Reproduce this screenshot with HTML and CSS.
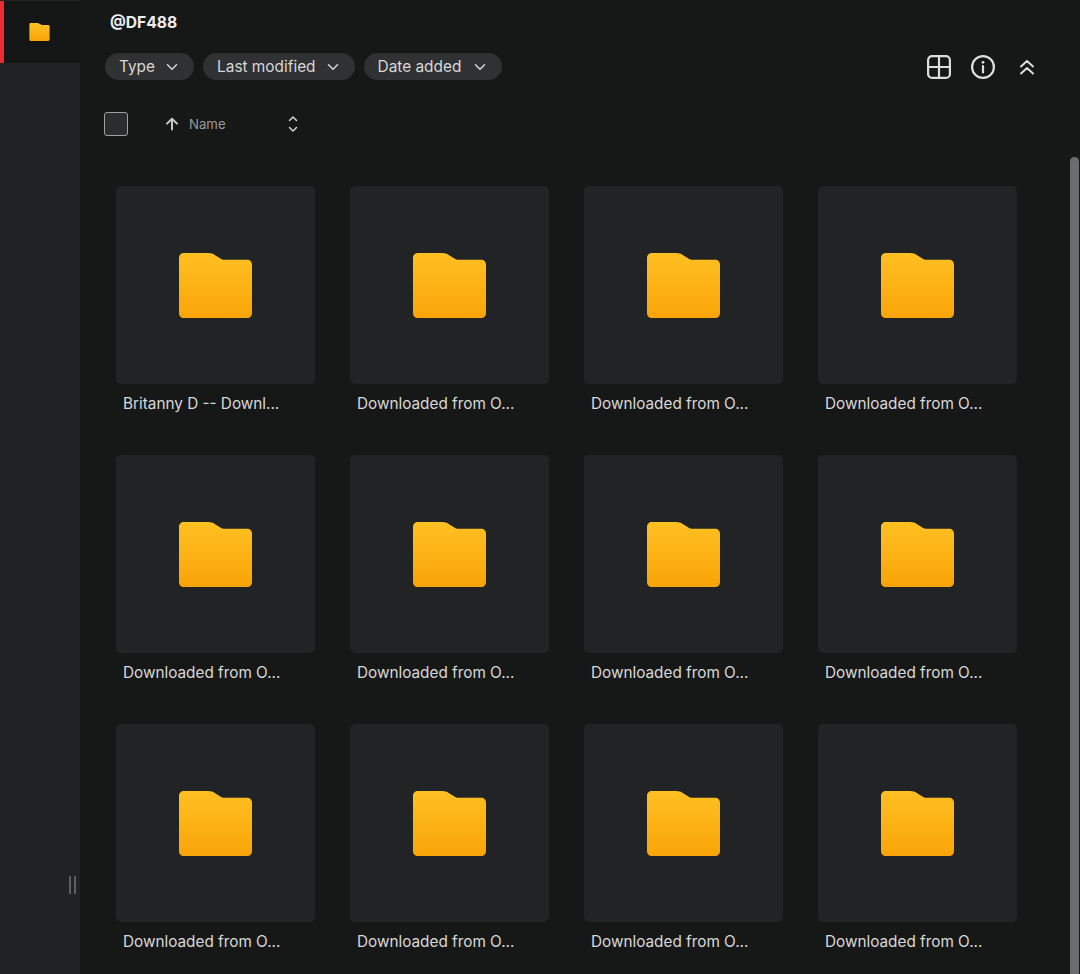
FILE: index.html
```html
<!DOCTYPE html>
<html lang="en">

<head>
    <meta charset="UTF-8">
    <meta name="viewport" content="width=device-width, initial-scale=1.0">
    <title>@DF488</title>
    <link rel="stylesheet" href="styles.css">
</head>

<body>
    <svg class="defs" width="0" height="0">
        <defs>
            <linearGradient id="folderFill" x1="0" y1="0" x2="0" y2="1">
                <stop offset="0" stop-color="#ffc022" />
                <stop offset="1" stop-color="#f9a408" />
            </linearGradient>
            <symbol id="folder" viewBox="0 0 73 65">
                <path fill="url(#folderFill)" d="M5 0H29C32 0 34 .7 36.5 2.4L41 5.2C42.5 6.2 44 6.8 46 6.8H68C71 6.8 73 8.8 73 11.8V60C73 63 71 65 68 65H5C2 65 0 63 0 60V5C0 2 2 0 5 0Z" />
            </symbol>
            <symbol id="chevron" viewBox="0 0 12 8">
                <path d="M1.5 1.8 6 6.2l4.5-4.4" fill="none" stroke="currentColor" stroke-width="1.5" stroke-linecap="round" stroke-linejoin="round" />
            </symbol>
        </defs>
    </svg>

    <aside class="sidebar">
        <div class="side-item">
            <svg class="side-folder"><use href="#folder" /></svg>
        </div>
        <div class="resize-handle"></div>
    </aside>

    <main class="content">
        <h1 class="title">@DF488</h1>

        <div class="toolbar">
            <button class="pill">Type <svg class="chev"><use href="#chevron" /></svg></button>
            <button class="pill">Last modified <svg class="chev"><use href="#chevron" /></svg></button>
            <button class="pill pill-date">Date added <svg class="chev"><use href="#chevron" /></svg></button>
            <div class="tools">
                <svg class="tool" viewBox="0 0 24 24" fill="none" stroke="currentColor" stroke-width="2.2">
                    <rect x="1.1" y="1.1" width="21.8" height="21.8" rx="4" />
                    <path d="M12 1V23M1 12H23" />
                </svg>
                <svg class="tool" viewBox="0 0 24 24" fill="none" stroke="currentColor" stroke-width="2.2">
                    <circle cx="12" cy="12" r="10.9" />
                    <path d="M12 11V17.5" stroke-linecap="round" />
                    <circle cx="12" cy="7.3" r="1.4" fill="currentColor" stroke="none" />
                </svg>
                <svg class="tool tool-small" viewBox="0 0 16 16" fill="none" stroke="currentColor" stroke-width="1.9" stroke-linecap="round" stroke-linejoin="round">
                    <path d="M2 7.5 8 2l6 5.5M2 14.5 8 9l6 5.5" />
                </svg>
            </div>
        </div>

        <div class="sort-row">
            <span class="checkbox"></span>
            <svg class="arrow-up" viewBox="0 0 14 14" fill="none" stroke="currentColor" stroke-width="2" stroke-linecap="round" stroke-linejoin="round">
                <path d="M7 12.5V1.8M2 6.6 7 1.8l5 4.8" />
            </svg>
            <span class="sort-name">Name</span>
            <svg class="updown" viewBox="0 0 10 18" fill="none" stroke="currentColor" stroke-width="1.5" stroke-linecap="round" stroke-linejoin="round">
                <path d="M1.5 5.5 5 2l3.5 3.5M1.5 12.5 5 16l3.5-3.5" />
            </svg>
        </div>

        <div class="grid">
            <div class="card">
                <div class="thumb"><svg class="folder"><use href="#folder" /></svg></div>
                <p class="name">Britanny D -- Downl...</p>
            </div>
            <div class="card">
                <div class="thumb"><svg class="folder"><use href="#folder" /></svg></div>
                <p class="name">Downloaded from O...</p>
            </div>
            <div class="card">
                <div class="thumb"><svg class="folder"><use href="#folder" /></svg></div>
                <p class="name">Downloaded from O...</p>
            </div>
            <div class="card">
                <div class="thumb"><svg class="folder"><use href="#folder" /></svg></div>
                <p class="name">Downloaded from O...</p>
            </div>
            <div class="card">
                <div class="thumb"><svg class="folder"><use href="#folder" /></svg></div>
                <p class="name">Downloaded from O...</p>
            </div>
            <div class="card">
                <div class="thumb"><svg class="folder"><use href="#folder" /></svg></div>
                <p class="name">Downloaded from O...</p>
            </div>
            <div class="card">
                <div class="thumb"><svg class="folder"><use href="#folder" /></svg></div>
                <p class="name">Downloaded from O...</p>
            </div>
            <div class="card">
                <div class="thumb"><svg class="folder"><use href="#folder" /></svg></div>
                <p class="name">Downloaded from O...</p>
            </div>
            <div class="card">
                <div class="thumb"><svg class="folder"><use href="#folder" /></svg></div>
                <p class="name">Downloaded from O...</p>
            </div>
            <div class="card">
                <div class="thumb"><svg class="folder"><use href="#folder" /></svg></div>
                <p class="name">Downloaded from O...</p>
            </div>
            <div class="card">
                <div class="thumb"><svg class="folder"><use href="#folder" /></svg></div>
                <p class="name">Downloaded from O...</p>
            </div>
            <div class="card">
                <div class="thumb"><svg class="folder"><use href="#folder" /></svg></div>
                <p class="name">Downloaded from O...</p>
            </div>
        </div>

        <div class="scrollbar"></div>
    </main>
</body>

</html>
```

FILE: styles.css
```css
html,
body {
    height: 100%;
}

body {
    margin: 0;
    display: flex;
    overflow: hidden;
    background-color: #161717;
    color: #e4e4e4;
    font-family: Inter, "Liberation Sans", sans-serif;
}

.defs {
    position: absolute;
}

.sidebar {
    position: relative;
    width: 80px;
    flex-shrink: 0;
    background-color: #202224;
}

.side-item {
    height: 62px;
    margin-top: 1px;
    border-left: 4px solid #ee2b33;
    background-color: #141515;
    display: flex;
    align-items: center;
    padding-left: 25px;
}

.side-folder {
    width: 21px;
    height: 18px;
}

.resize-handle {
    position: absolute;
    left: 69px;
    top: 876px;
    width: 3px;
    height: 18px;
    border-left: 2px solid #5c5e60;
    border-right: 2px solid #5c5e60;
}

.content {
    position: relative;
    flex: 1;
    padding-left: 25px;
}

.title {
    margin: 0;
    padding: 13px 0 0 5px;
    height: 40px;
    box-sizing: border-box;
    font-size: 15.6px;
    line-height: 19px;
    font-weight: 700;
    color: #eeeeee;
}

.toolbar {
    display: flex;
    align-items: center;
    gap: 9px;
    height: 27px;
    margin-top: 13px;
}

.pill {
    display: flex;
    align-items: center;
    gap: 11px;
    height: 27px;
    padding: 0 16px 0 14px;
    border: none;
    border-radius: 14px;
    background-color: #2f3132;
    color: #d8d8d8;
    font-family: inherit;
    font-size: 15.4px;
}

.pill-date {
    gap: 13px;
}

.chev {
    width: 12px;
    height: 8px;
}

.tools {
    display: flex;
    align-items: center;
    gap: 20px;
    margin-left: auto;
    margin-right: 45px;
    color: #dedede;
}

.tool {
    width: 24px;
    height: 24px;
}

.tool-small {
    width: 16px;
    height: 16px;
    margin-left: 4px;
}

.sort-row {
    display: flex;
    align-items: center;
    height: 24px;
    margin-top: 32px;
    color: #b4b4b4;
}

.checkbox {
    width: 22px;
    height: 22px;
    margin-left: -1px;
    border: 1px solid #a0a0a0;
    border-radius: 3px;
    background-color: #2b2c2e;
}

.arrow-up {
    width: 14px;
    height: 14px;
    margin-left: 37px;
    color: #c8c8c8;
}

.sort-name {
    margin-left: 10px;
    font-size: 13.2px;
    color: #9a9a9a;
}

.updown {
    width: 10px;
    height: 18px;
    margin-left: 62px;
    color: #d4d4d4;
}

.grid {
    display: grid;
    grid-template-columns: repeat(4, 199px);
    column-gap: 35px;
    row-gap: 41px;
    margin-top: 50px;
    margin-left: 11px;
}

.thumb {
    height: 198px;
    border-radius: 5px;
    background-color: #212325;
    display: flex;
    align-items: center;
    justify-content: center;
}

.folder {
    width: 73px;
    height: 65px;
}

.name {
    margin: 10px 0 0 7px;
    font-size: 15.3px;
    line-height: 20px;
    height: 20px;
    white-space: nowrap;
    color: #d9d9d9;
}

.scrollbar {
    position: absolute;
    right: 1px;
    top: 157px;
    bottom: 0;
    width: 9px;
    border-radius: 5px 5px 0 0;
    background-color: #6b6c6d;
}
```
